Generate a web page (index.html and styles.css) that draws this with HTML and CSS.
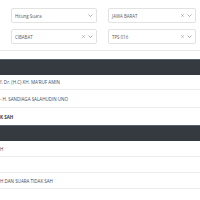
FILE: index.html
```html
<!DOCTYPE html>
<html>
<head>
<meta charset="utf-8">
<link rel="stylesheet" href="styles.css">
</head>
<body>
<div class="card">
  <div class="filters">
    <div class="select"><span class="val"></span><span class="icons"><svg class="chev" viewBox="0 0 5 3"><path d="M0.5 0.5 L2.5 2.5 L4.5 0.5"/></svg></span></div>
    <div class="select"><span class="val">Hitung Suara</span><span class="icons"><svg class="chev" viewBox="0 0 5 3"><path d="M0.5 0.5 L2.5 2.5 L4.5 0.5"/></svg></span></div>
    <div class="select"><span class="val">JAWA BARAT</span><span class="icons"><svg class="clear" viewBox="0 0 3 3"><path d="M0.3 0.3 L2.7 2.7 M2.7 0.3 L0.3 2.7"/></svg><svg class="chev" viewBox="0 0 5 3"><path d="M0.5 0.5 L2.5 2.5 L4.5 0.5"/></svg></span></div>
    <div class="select"><span class="val"></span><span class="icons"><svg class="clear" viewBox="0 0 3 3"><path d="M0.3 0.3 L2.7 2.7 M2.7 0.3 L0.3 2.7"/></svg><svg class="chev" viewBox="0 0 5 3"><path d="M0.5 0.5 L2.5 2.5 L4.5 0.5"/></svg></span></div>
    <div class="select"><span class="val">CIBABAT</span><span class="icons"><svg class="clear" viewBox="0 0 3 3"><path d="M0.3 0.3 L2.7 2.7 M2.7 0.3 L0.3 2.7"/></svg><svg class="chev" viewBox="0 0 5 3"><path d="M0.5 0.5 L2.5 2.5 L4.5 0.5"/></svg></span></div>
    <div class="select"><span class="val">TPS 016</span><span class="icons"><svg class="clear" viewBox="0 0 3 3"><path d="M0.3 0.3 L2.7 2.7 M2.7 0.3 L0.3 2.7"/></svg><svg class="chev" viewBox="0 0 5 3"><path d="M0.5 0.5 L2.5 2.5 L4.5 0.5"/></svg></span></div>
  </div>
</div>
<div class="table">
  <div class="thead"></div>
  <div class="row short">f. Dr. (H.C) KH. MA'RUF AMIN</div>
  <div class="row tall">- H. SANDIAGA SALAHUDIN UNO</div>
  <div class="row tall last bold">K SAH</div>
  <div class="thead"></div>
  <div class="row">H</div>
  <div class="row"></div>
  <div class="row">H DAN SUARA TIDAK SAH</div>
  <div class="row"></div>
</div>
</body>
</html>
```
FILE: styles.css
```css
html, body {
  margin: 0;
  padding: 0;
  background: #ffffff;
  overflow: hidden;
}
body {
  width: 200px;
  height: 200px;
  font-family: "Open Sans", "Liberation Sans", sans-serif;
}
.card {
  border-bottom: 1px solid #e8e8e8;
  margin-bottom: 8px;
}
.filters {
  display: grid;
  grid-template-columns: 86px 86px 88px;
  column-gap: 11px;
  row-gap: 6px;
  margin-left: -86px;
  padding: 8px 0 6px;
}
.select {
  height: 13px;
  border: 1px solid #e2e2e2;
  border-radius: 2px;
  display: flex;
  align-items: center;
  justify-content: space-between;
  padding: 0 3px;
  font-size: 4.4px;
  color: #555a60;
}
.icons {
  display: flex;
  align-items: center;
  gap: 3px;
}
.clear {
  width: 3px;
  height: 3px;
  stroke: #a0a0a0;
  stroke-width: 0.7;
  fill: none;
}
.chev {
  width: 5px;
  height: 3px;
  stroke: #8a8f96;
  stroke-width: 0.7;
  fill: none;
}
.thead {
  height: 15px;
  background: #343a40;
  border-top: 1px solid #59606a;
}
.row {
  height: 15px;
  border-bottom: 1px solid #ececec;
  display: flex;
  align-items: center;
  padding-left: 0;
  font-size: 4.5px;
  color: #3d4a5c;
  white-space: nowrap;
}
.row.short {
  height: 14px;
}
.row.tall {
  height: 17px;
}
.row.last {
  border-bottom: none;
}
.bold {
  font-weight: 700;
  color: #2f3a47;
}
```
